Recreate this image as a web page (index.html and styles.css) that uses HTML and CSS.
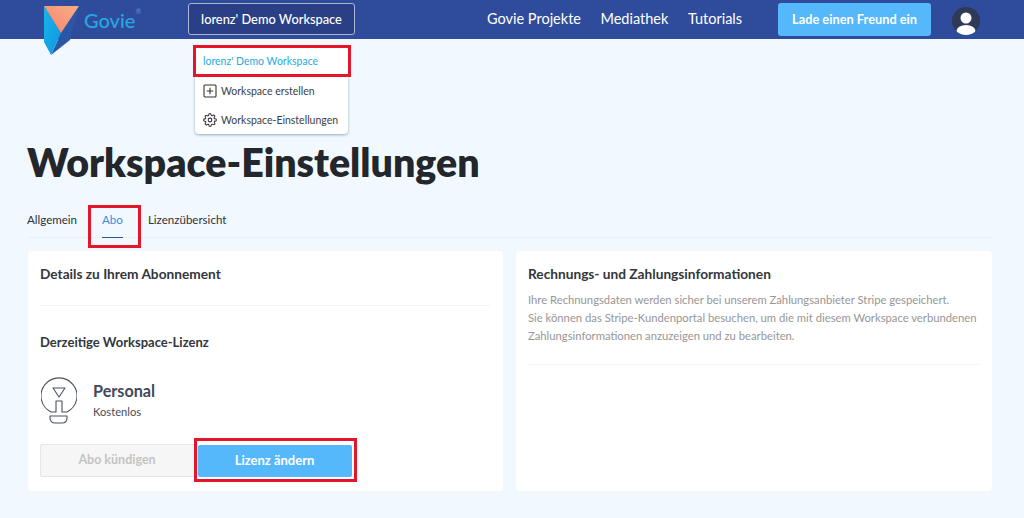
FILE: index.html
```html
<!DOCTYPE html>
<html lang="de">
<head>
<meta charset="utf-8">
<title>Workspace-Einstellungen</title>
<link rel="stylesheet" href="styles.css">
</head>
<body>
<header class="topbar">
  <div class="brand">
    <svg class="logo" width="38" height="56" viewBox="0 0 38 56">
      <defs>
        <linearGradient id="lg1" x1="0" y1="1" x2="1" y2="0"><stop offset="0" stop-color="#f5856f"/><stop offset="1" stop-color="#f7ad86"/></linearGradient>
        <linearGradient id="lg2" x1="0" y1="0" x2="1" y2="1"><stop offset="0" stop-color="#17b4ee"/><stop offset="1" stop-color="#1296dc"/></linearGradient>
      </defs>
      <polygon points="8,55 18,33 36,6 27,40" fill="#2b56a6"/>
      <polygon points="1,6 18,33 8,55 1,42" fill="url(#lg2)"/>
      <polygon points="1,6 36,6 18,33" fill="url(#lg1)"/>
    </svg>
    <span class="brand-name">Govie<sup class="reg">®</sup></span>
  </div>
  <button class="ws-button">lorenz' Demo Workspace</button>
  <nav class="nav">
    <a>Govie Projekte</a>
    <a>Mediathek</a>
    <a>Tutorials</a>
  </nav>
  <button class="invite">Lade einen Freund ein</button>
  <svg class="avatar" width="28" height="28" viewBox="0 0 28 28">
    <defs><clipPath id="ac"><circle cx="14" cy="14" r="14"/></clipPath></defs>
    <circle cx="14" cy="14" r="14" fill="#2f3a56"/>
    <g clip-path="url(#ac)" fill="#fff">
      <circle cx="14" cy="11" r="5.5"/>
      <ellipse cx="14" cy="24" rx="9.5" ry="6"/>
    </g>
  </svg>
</header>

<div class="menu">
  <div class="menu-item active">lorenz' Demo Workspace</div>
  <div class="menu-item">
    <svg width="14" height="14" viewBox="0 0 14 14" fill="none" stroke="#333" stroke-width="1.1"><rect x="1" y="1" width="12" height="12" rx="1"/><path d="M7 3.800v6.400M3.800 7h6.400"/></svg>
    Workspace erstellen
  </div>
  <div class="menu-item">
    <svg width="14" height="14" viewBox="0 0 24 24" fill="none" stroke="#333" stroke-width="1.8" stroke-linejoin="round"><circle cx="12" cy="12" r="3.2"/><path d="M19.4 15a1.65 1.65 0 0 0 .33 1.82l.06.06a2 2 0 1 1-2.83 2.83l-.06-.06a1.65 1.65 0 0 0-2.8 1.17V21a2 2 0 1 1-4 0v-.09a1.65 1.65 0 0 0-2.8-1.17l-.06.06a2 2 0 1 1-2.83-2.83l.06-.06a1.65 1.65 0 0 0-1.17-2.8H3a2 2 0 1 1 0-4h.09a1.65 1.65 0 0 0 1.17-2.8l-.06-.06a2 2 0 1 1 2.83-2.83l.06.06a1.65 1.65 0 0 0 2.8-1.17V3a2 2 0 1 1 4 0v.09a1.65 1.65 0 0 0 2.8 1.17l.06-.06a2 2 0 1 1 2.83 2.83l-.06.06a1.65 1.65 0 0 0 1.17 2.8H21a2 2 0 1 1 0 4h-.09A1.65 1.65 0 0 0 19.4 15z"/></svg>
    Workspace-Einstellungen
  </div>
</div>

<main class="page">
  <h1 class="title">Workspace-Einstellungen</h1>
  <div class="tabs">
    <a class="tab">Allgemein</a>
    <a class="tab current">Abo</a>
    <a class="tab">Lizenzübersicht</a>
  </div>
  <div class="cards">
    <section class="card">
      <h2 class="card-title">Details zu Ihrem Abonnement</h2>
      <hr class="rule rule-a">
      <h3 class="sub-title">Derzeitige Workspace-Lizenz</h3>
      <div class="plan">
        <svg class="bulb" width="36" height="47" viewBox="0 0 36 47" fill="none" stroke="#4a5160" stroke-width="1.1" stroke-linejoin="round">
          <path d="M10 35A18 18 0 1 1 26 35H21V24H15V35Z"/>
          <polygon points="12,11 24,11 18,20"/>
          <path d="M9 39H26V41C26 44 24 46 21 46H14C11 46 9 44 9 41Z"/>
        </svg>
        <div>
          <div class="plan-name">Personal</div>
          <div class="plan-price">Kostenlos</div>
        </div>
      </div>
      <div class="actions">
        <button class="btn-cancel">Abo kündigen</button>
        <button class="btn-change">Lizenz ändern</button>
      </div>
    </section>
    <section class="card">
      <h2 class="card-title">Rechnungs- und Zahlungsinformationen</h2>
      <p class="info">Ihre Rechnungsdaten werden sicher bei unserem Zahlungsanbieter Stripe gespeichert.<br>Sie können das Stripe-Kundenportal besuchen, um die mit diesem Workspace verbundenen Zahlungsinformationen anzuzeigen und zu bearbeiten.</p>
      <hr class="rule">
    </section>
  </div>
</main>

<div class="mark mark-menu"></div>
<div class="mark mark-tab"></div>
<div class="mark mark-btn"></div>
</body>
</html>
```

FILE: styles.css
```css
* { box-sizing: border-box; }
html, body { margin: 0; height: 518px; overflow: hidden; }
body { background: #f2f9fe; font-family: Lato, "Liberation Sans", sans-serif; color: #2a2d33; position: relative; }

.topbar { height: 39px; background: #2f4c9c; display: flex; align-items: center; color: #fff; padding: 0 0 1px 43px; }
.brand { width: 145px; display: flex; align-items: center; height: 39px; align-self: flex-start; }
.logo { align-self: flex-start; flex: none; }
.brand-name { color: #27a7e2; font-size: 20px; font-weight: 500; margin-left: 3px; }
.reg { font-size: 7px; vertical-align: top; position: relative; top: -1px; color: #5b8fc9; }
.ws-button { width: 167px; height: 32px; background: #2a3f85; border: 1px solid #a9b6d8; border-radius: 3px; color: #fff; font: 500 12.8px Lato, sans-serif; padding: 0; }
.nav { display: flex; gap: 19.5px; margin: 0 0 2px 132px; font-size: 14.5px; }
.invite { margin-left: 36px; width: 153px; height: 33px; background: #54b8fb; border: 0; border-radius: 3px; color: #fff; font: 700 12.8px Lato, sans-serif; padding: 0; }
.avatar { margin-left: 21px; margin-top: 3px; }

.menu { position: absolute; left: 195px; top: 47px; width: 153px; height: 87px; background: #fff; border-radius: 4px; box-shadow: 0 1px 3px rgba(60,110,130,.55); font-size: 10.5px; z-index: 2; }
.menu-item { height: 29px; display: flex; align-items: center; gap: 4px; padding-left: 8px; color: #3b3e44; }
.menu-item.active { color: #27a9e3; padding-bottom: 1px; }

.page { padding: 0 32px 0 28px; }
.title { margin: 0 0 0 -1px; padding-top: 98px; font-size: 39.3px; line-height: 50px; font-weight: 800; color: #23262b; }
.tabs { display: flex; height: 51px; padding-top: 25px; font-size: 11.55px; border-bottom: 1px solid #e9f1f6; }
.tab { color: #2e3136; line-height: 15px; margin-left: -1px; margin-right: 26px; }
.tab.current { color: #3a8ce0; position: relative; }
.tab.current::after { content: ""; position: absolute; left: 0; right: 0; top: 25px; height: 1px; background: #34509c; }

.cards { display: flex; gap: 13px; margin-top: 13px; }
.card { width: 475px; height: 240px; background: #fff; border-radius: 4px; padding: 14px 13px 0 12px; }
.card + .card { width: 476px; }
.card-title { margin: 0; font-size: 13.7px; line-height: 17px; font-weight: 700; color: #33363c; }
.rule { border: 0; border-top: 1px solid #f1f3f5; margin: 0; }
.rule-a { margin-top: 23px; }
.sub-title { margin: 28px 0 0; font-size: 13px; line-height: 17px; font-weight: 700; color: #33363c; }
.plan { display: flex; align-items: flex-start; gap: 16px; margin-top: 26px; }
.bulb { flex: none; margin-left: 1px; }
.plan-name { font-size: 16.2px; font-weight: 700; line-height: 21px; color: #414a5b; margin-top: 3px; }
.plan-price { font-size: 11.2px; line-height: 15px; color: #4a4e56; margin-top: 3px; }
.actions { display: flex; align-items: flex-end; margin-top: 20px; }
.btn-cancel { width: 158px; height: 33px; background: #f6f6f6; border: 1px solid #e6e6e6; border-radius: 2px 0 0 2px; color: #c4c4c4; font: 700 12.5px Lato, sans-serif; padding: 0 4px 2px 0; }
.btn-change { width: 154px; height: 32px; background: #54b8fb; border: 0; border-radius: 2px; color: #fff; font: 700 13px Lato, sans-serif; padding: 0 1px 3px 0; }
.info { margin: 9px 0 19px; font-size: 11.25px; line-height: 18px; color: #969696; }

.mark { position: absolute; border: 3px solid #e5152a; z-index: 3; pointer-events: none; }
.mark-menu { left: 193px; top: 45px; width: 158px; height: 32px; }
.mark-tab { left: 88px; top: 205px; width: 53px; height: 43px; }
.mark-btn { left: 194px; top: 438px; width: 163px; height: 44px; }
```
